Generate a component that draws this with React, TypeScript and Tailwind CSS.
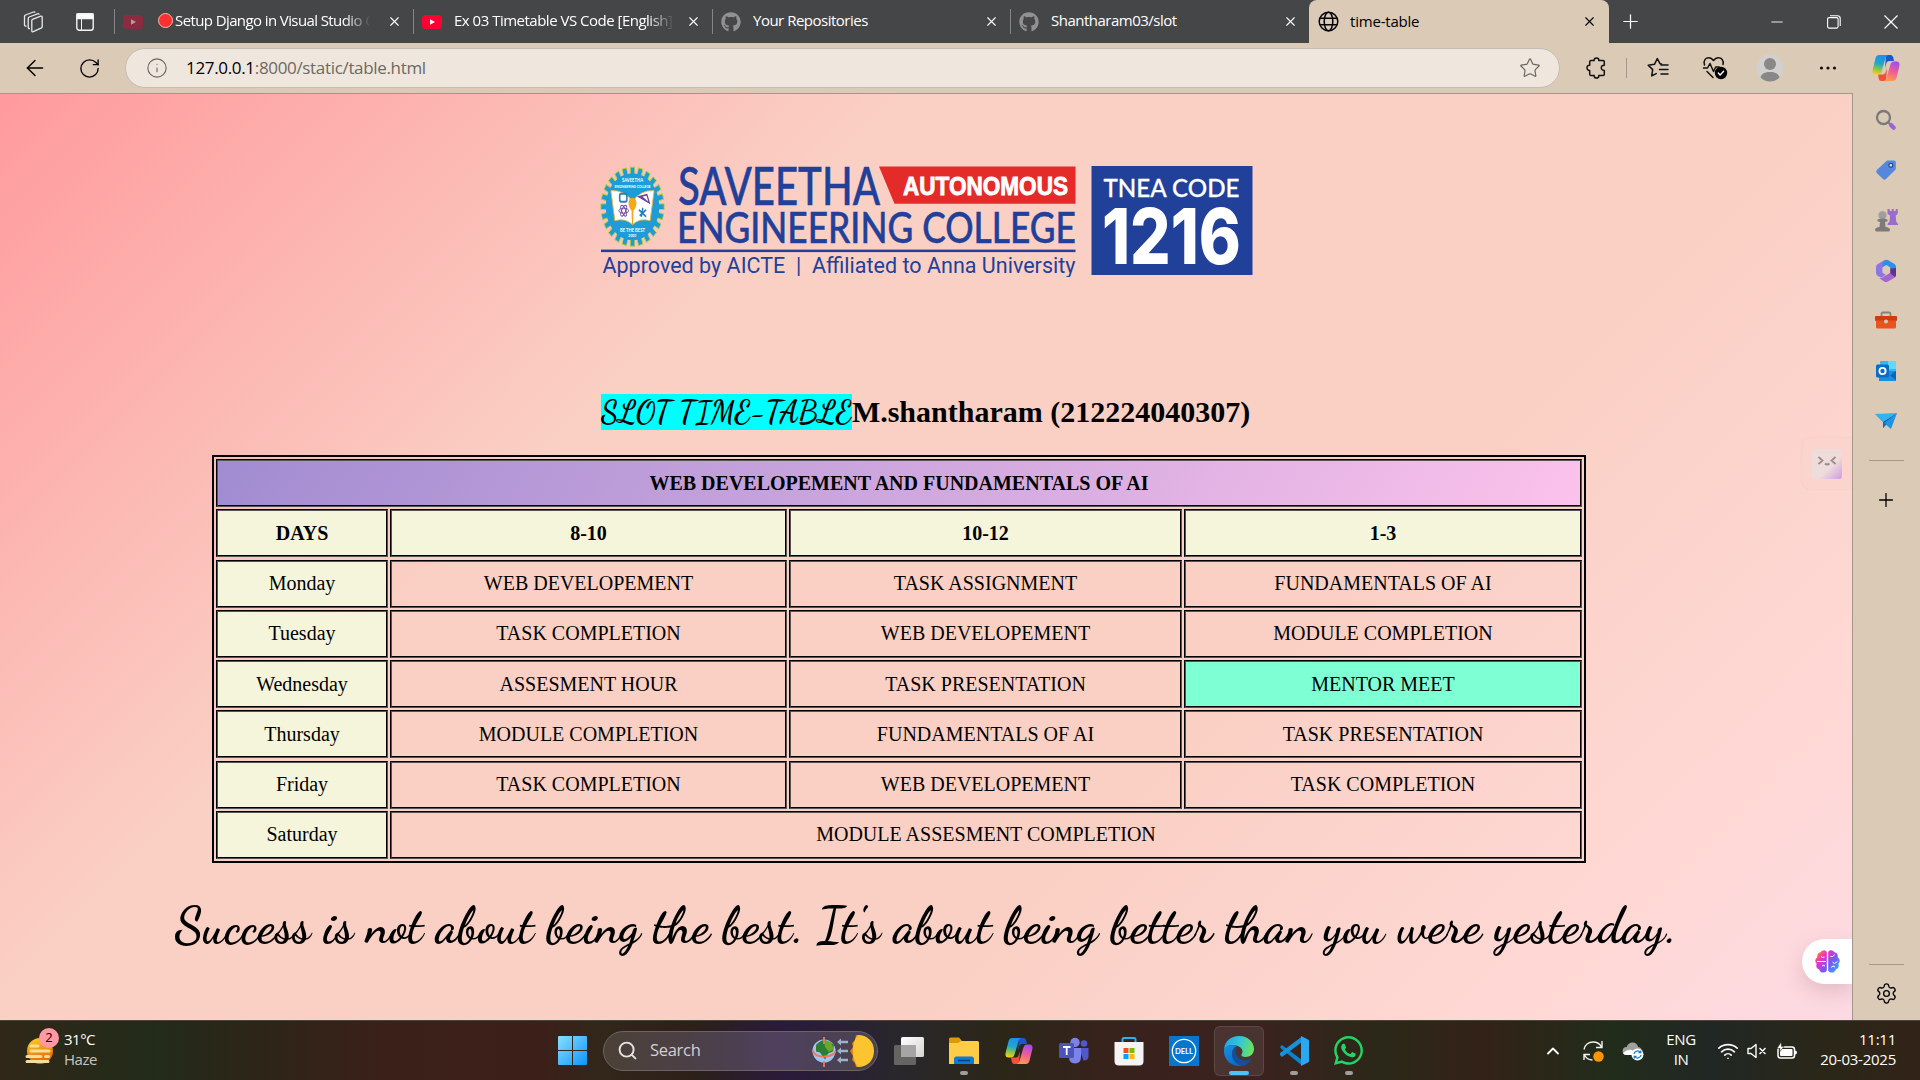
import React from "react";
import { ArrowLeft, RotateCw, Star, X, Plus, Minus, Info, Search, ChevronUp, Wifi, Settings } from "lucide-react";
import { FaGithub, FaWhatsapp } from "react-icons/fa";

const ui = "font-['Open_Sans','Noto_Sans',sans-serif]";
const serif = "font-['Liberation_Serif','Times_New_Roman',serif]";

function CopilotIcon({ size, id }: { size: number; id: string }) {
  return (
    <svg width={size} height={size} viewBox="0 0 28 28">
      <defs>
        <linearGradient id={id + "a"} x1="0.5" y1="0" x2="0.3" y2="1">
          <stop offset="0" stopColor="#1d8ff0" />
          <stop offset="0.45" stopColor="#22a8c4" />
          <stop offset="0.75" stopColor="#8fc648" />
          <stop offset="1" stopColor="#fccf0d" />
        </linearGradient>
        <linearGradient id={id + "b"} x1="0.7" y1="0" x2="0.4" y2="1">
          <stop offset="0" stopColor="#a14df0" />
          <stop offset="0.5" stopColor="#f05b98" />
          <stop offset="1" stopColor="#ff9a4d" />
        </linearGradient>
      </defs>
      <path d="M14 1h4.500c1.500 0 2.300 1 2.700 2.300L22 7h-4.500c-2 0-2.800 1-3.300 2.800L13 14Z" fill="#1c56cf" />
      <path d="M14 27H9.500c-1.500 0-2.300-1-2.700-2.300L6 20.500h4.500c2 0 2.800-1 3.300-2.800L15 14Z" fill="#f2503b" />
      <path d="M7.500 1h9c-1.700.4-2.500 1.600-3 3.300L9.700 17c-.7 2.400-1.700 3.500-4 3.500H3.500C1 20.500 0 18.700.6 16L3.500 4.200C4.100 2 5.300 1 7.500 1Z" fill={`url(#${id}a)`} />
      <path d="M20.500 27h-9c1.700-.4 2.500-1.600 3-3.300L18.300 11c.7-2.400 1.700-3.500 4-3.500h2.200c2.500 0 3.500 1.800 2.900 4.500l-2.900 11.800c-.6 2.200-1.800 3.200-4 3.200Z" fill={`url(#${id}b)`} />
    </svg>
  );
}

function Tab({ icon, title, width, extra }: { icon: React.ReactNode; title: React.ReactNode; width: string; extra?: string }) {
  return (
    <div className={`flex h-[43px] shrink-0 items-center ${width}`}>
      <div className="h-[25px] w-px bg-[#858587]" />
      <div className="ml-2 flex w-5 justify-center">{icon}</div>
      <div className={`ml-3 flex-1 overflow-hidden pb-[3px] text-[15px] leading-5 tracking-[-0.5px] whitespace-nowrap text-white ${extra ?? ""}`}>{title}</div>
      <X size={15} strokeWidth={1.8} className="mr-[11px] ml-3 shrink-0 text-white" />
    </div>
  );
}

function TabBar() {
  return (
    <div className="flex h-[43px] bg-[#454648]">
      <div className="flex w-[114px] items-center">
        <svg className="ml-[22px]" width="22" height="22" viewBox="0 0 22 22" fill="none" stroke="#e8e8e8" strokeWidth="1.300" strokeLinejoin="round">
          <path d="M10.500 8.300 18.700 5.200q1.500-.4 1.500 1v9.500q0 .7-.7 1.200l-8.200 3.800q-1.500.5-1.500-1V9.500q0-.8.700-1.200Z" />
          <path d="M8 17.500q-1.800.3-1.800-1.200V7.500q0-1 1-1.500L15.500 2.800q1.500-.4 1.700.8" />
          <path d="M4.500 15q-2 .3-2-1.200V5.500q0-1 1-1.500L11.500 1q1.300-.4 1.700.5" />
        </svg>
        <svg className="ml-[32px]" width="18" height="18" viewBox="0 0 18 18" fill="none" stroke="#f4f4f4" strokeWidth="1.400">
          <rect x="0.800" y="0.800" width="16.400" height="16.400" rx="2.500" />
          <path d="M1 1h16v4.500H1Z" fill="#fff" />
          <path d="M5.500 6v11" strokeWidth="1" />
        </svg>
      </div>
      <Tab
        width="w-[299px]"
        icon={<svg width="20" height="14" viewBox="0 0 20 14"><rect width="20" height="14" rx="3.500" fill="#8b2b40" /><path d="m8 4.200 5 2.800-5 2.800Z" fill="#a9a0a4" /></svg>}
        extra="!ml-[15px] [mask-image:linear-gradient(90deg,#000_86%,transparent_98%)]"
        title={<span className="flex items-center tracking-[-0.6px]"><i className="mr-[2px] block size-[15px] shrink-0 rounded-full border border-[#ffb5b0] bg-[#fb3030]" />Setup Django in Visual Studio Code</span>}
      />
      <Tab
        width="w-[299px]"
        icon={<svg width="20" height="14" viewBox="0 0 20 14"><rect width="20" height="14" rx="3.500" fill="#ff0033" /><path d="m8 4.200 5 2.800-5 2.800Z" fill="#fff" /></svg>}
        extra="[mask-image:linear-gradient(90deg,#000_88%,transparent_100%)]"
        title="Ex 03 Timetable VS Code [English]"
      />
      <Tab width="w-[298px]" icon={<FaGithub size={20} color="#919193" />} title="Your Repositories" />
      <Tab width="w-[299px]" icon={<FaGithub size={20} color="#919193" />} title="Shantharam03/slot" />
      <div className="flex h-[43px] w-[300px] items-center rounded-t-lg bg-[#dbcab6] text-black">
        <svg className="ml-[9px]" width="21" height="21" viewBox="0 0 21 21" fill="none" stroke="#000" strokeWidth="1.500">
          <circle cx="10.500" cy="10.500" r="9.300" />
          <ellipse cx="10.500" cy="10.500" rx="4.300" ry="9.300" />
          <path d="M2.200 7.200h16.600M2.200 13.800h16.600" />
        </svg>
        <div className="ml-[11px] flex-1 pb-px text-[15px] tracking-[-0.2px]">time-table</div>
        <X size={15} strokeWidth={1.8} className="mr-[12px]" />
      </div>
      <div className="flex flex-1 items-center text-white">
        <Plus size={23} strokeWidth={1.3} className="ml-[10px]" />
        <Minus size={18} strokeWidth={1.2} className="ml-[126px]" />
        <svg className="ml-[41px]" width="14" height="14" viewBox="0 0 14 14" fill="none" stroke="#fff" strokeWidth="1.100">
          <rect x="0.600" y="2.600" width="10.500" height="10.500" rx="1.500" />
          <path d="M3 .7h7.500q2.700 0 2.700 2.700V11" />
        </svg>
        <svg className="ml-[43px]" width="14" height="14" viewBox="0 0 14 14" stroke="#fff" strokeWidth="1.200"><path d="m.5.5 13 13m0-13-13 13" /></svg>
      </div>
    </div>
  );
}

function Toolbar() {
  return (
    <div className="flex h-[50px] items-center bg-[#dbcab6] text-black">
      <ArrowLeft size={26} strokeWidth={1.3} className="ml-[22px]" />
      <RotateCw size={23} strokeWidth={1.4} className="ml-[30px]" />
      <div className="ml-[24px] flex h-[40px] w-[1435px] items-center rounded-full border border-[#c4bdb4] bg-[#efe7de]">
        <Info size={22} strokeWidth={1.2} className="ml-5 text-[#666]" />
        <div className="ml-[18px] flex-1 text-[17px] tracking-[-0.33px] text-[#6d6862]"><span className="text-black">127.0.0.1</span>:8000/static/table.html</div>
        <Star size={22} strokeWidth={1.3} className="mr-[18px] text-[#6b6660]" />
      </div>
      <svg className="ml-[26px]" width="21" height="22" viewBox="0 0 21 22" fill="none" stroke="#111" strokeWidth="1.500" strokeLinejoin="round">
        <path d="M5 3.500h3.200C8 1.800 9 1 10.500 1S13 1.800 12.800 3.500H17q1.300 0 1.300 1.300v3.400c-2-.1-3 .9-3 2.600s1 2.700 3 2.600v3.800q0 1.300-1.300 1.300h-4.200c.2 1.700-.8 2.500-2.300 2.500S8 20.200 8.200 18.500H5q-1.300 0-1.300-1.300v-3.800C2 13.500 1 12.500 1 10.800s1-2.700 2.700-2.600V4.800Q3.700 3.500 5 3.500Z" />
      </svg>
      <div className="ml-[19px] h-5 w-px bg-[#a3998b]" />
      <svg className="ml-[20px]" width="22" height="22" viewBox="0 0 22 22" fill="none" stroke="#111" strokeWidth="1.500" strokeLinecap="round" strokeLinejoin="round">
        <path d="M14.500 7 13 6.700 10.300 1.500 7.500 7.300l-6.300.9 4.500 4.400-1 6.300 4.500-2.300" />
        <path d="M14 8h7M12.500 12.500H21M14 17h7" />
      </svg>
      <svg className="ml-[33px]" width="26" height="24" viewBox="0 0 26 24" fill="none" stroke="#111" strokeWidth="1.500" strokeLinecap="round" strokeLinejoin="round">
        <path d="M2.500 9C1 4 4 1.500 7 1.700c2 .1 3.300 1.200 4.500 2.800C12.700 2.900 14 1.800 16 1.700c3.500-.2 6 2.600 5 6.800" />
        <path d="M1.500 12h4l2.500-4.500 3.500 8 2.200-4.500h3.500M5 15.500l6 6" />
        <circle cx="19" cy="17" r="6.200" fill="#000" stroke="none" />
        <path d="m16.300 17 1.800 1.900 3.500-3.700" stroke="#fff" strokeWidth="1.400" />
      </svg>
      <svg className="ml-[28px]" width="28" height="28" viewBox="0 0 28 28">
        <circle cx="14" cy="14" r="13.600" fill="#d2d0ce" />
        <circle cx="14" cy="10" r="6" fill="#8a8886" />
        <path d="M4.500 23.500C5.500 19.500 9 18 14 18s8.500 1.500 9.500 5.500A13.500 13.500 0 0 1 4.500 23.500Z" fill="#8a8886" />
      </svg>
      <svg className="ml-[35px]" width="18" height="6" viewBox="0 0 18 6" fill="#111"><circle cx="2.500" cy="3" r="1.600" /><circle cx="9" cy="3" r="1.600" /><circle cx="15.500" cy="3" r="1.600" /></svg>
      <div className="ml-[35px]"><CopilotIcon size={28} id="top" /></div>
    </div>
  );
}

function CollegeLogo() {
  const teeth = Array.from({ length: 24 }, (_, i) => i * 15);
  return (
    <svg className="ml-[600px] block" width="654" height="112" viewBox="600 165 654 112" fontFamily="Lato, sans-serif">
      <g transform="translate(632.500 206.700) scale(.8 1)">
        {teeth.map((a) => (
          <rect key={a} x="-2.800" y="-39.500" width="5.600" height="10" fill="#1d9cd8" stroke="#b5cf3a" strokeWidth="1" transform={`rotate(${a})`} />
        ))}
        <circle r="33.500" fill="#1d9cd8" />
        <path d="M-27-16Q-10-17 0-5 10-17 27-16L22 14Q9 11 0 18-9 11-22 14Z" fill="#fff" stroke="#e7b93a" strokeWidth="1" />
        <path d="M0-5V18" stroke="#d9a520" strokeWidth="1.500" />
        <path d="M-5-3Q-5-9 0-9T5-3Q4 2 1 4V12H-1V4Q-4 2-5-3Z" fill="#f5a81c" />
        <rect x="-16" y="-13" width="9" height="8" rx="2" fill="none" stroke="#2a7fb8" strokeWidth="2" />
        <g fill="none" stroke="#6b3f98" strokeWidth="1"><ellipse cx="-11" cy="4" rx="6" ry="2.400" /><ellipse cx="-11" cy="4" rx="6" ry="2.400" transform="rotate(60 -11 4)" /><ellipse cx="-11" cy="4" rx="6" ry="2.400" transform="rotate(120 -11 4)" /></g>
        <path d="m8-10 10-2 3 8Zm3 0 6 4" fill="none" stroke="#6b3f98" strokeWidth="1.500" />
        <path d="m8 3 9 7M13 1l-2 9M17 3l-8 6" stroke="#1d80c0" strokeWidth="1.800" />
        <g fill="#fff" fontWeight="700" textAnchor="middle" fontSize="5.200">
          <text y="-24.500">SAVEETHA</text>
          <text y="-18.800" fontSize="4">ENGINEERING COLLEGE</text>
          <text y="25">BE THE BEST</text>
          <text y="30.500" fontSize="4.500">2001</text>
        </g>
      </g>
      <g fill="#21409a" fontWeight="500" stroke="#21409a" strokeWidth=".5">
        <text x="678" y="205" fontSize="51.500" textLength="202" lengthAdjust="spacingAndGlyphs">SAVEETHA</text>
        <text x="677" y="243" fontSize="42.500" textLength="399" lengthAdjust="spacingAndGlyphs">ENGINEERING COLLEGE</text>
      </g>
      <path d="M879 166.500H1075.500V203.700H894.500Z" fill="#e42b2a" />
      <text x="903" y="195" fontFamily="Liberation Sans, sans-serif" fontWeight="700" fontSize="26.500" fill="#fff" stroke="#fff" strokeWidth=".9" textLength="165" lengthAdjust="spacingAndGlyphs">AUTONOMOUS</text>
      <rect x="601" y="249.600" width="474.500" height="2.500" fill="#21409a" />
      <text x="602.500" y="272.700" fontFamily="Roboto, sans-serif" fontSize="21.500" fill="#21409a" textLength="473" lengthAdjust="spacing">Approved by AICTE&nbsp; |&nbsp; Affiliated to Anna University</text>
      <rect x="1091.500" y="166" width="161" height="109" fill="#21409a" />
      <text x="1103.500" y="196.500" fontWeight="500" fontSize="25.500" fill="#fff" stroke="#fff" strokeWidth=".3" textLength="136" lengthAdjust="spacingAndGlyphs">TNEA CODE</text>
      <text x="1102" y="263.500" fontFamily="Inter, sans-serif" fontWeight="800" fontSize="77" fill="#fff" textLength="139" lengthAdjust="spacingAndGlyphs">1216</text>
    </svg>
  );
}

const rows: [string, string[]][] = [
  ["Monday", ["WEB DEVELOPEMENT", "TASK ASSIGNMENT", "FUNDAMENTALS OF AI"]],
  ["Tuesday", ["TASK COMPLETION", "WEB DEVELOPEMENT", "MODULE COMPLETION"]],
  ["Wednesday", ["ASSESMENT HOUR", "TASK PRESENTATION", "MENTOR MEET"]],
  ["Thursday", ["MODULE COMPLETION", "FUNDAMENTALS OF AI", "TASK PRESENTATION"]],
  ["Friday", ["TASK COMPLETION", "WEB DEVELOPEMENT", "TASK COMPLETION"]],
];

function Cell({ children, className = "" }: { children: React.ReactNode; className?: string }) {
  return <div className={`flex items-center justify-center border-2 border-black pb-px text-[20px] leading-none [border-style:groove] ${className}`}>{children}</div>;
}

function Timetable() {
  return (
    <div className="ml-[212px] grid w-[1374px] grid-cols-[172px_397px_393px_398px] grid-rows-[repeat(8,48px)] gap-x-[2px] gap-y-[2.28px] border-2 border-black p-[2px]">
      <Cell className="col-span-4 bg-linear-[120deg,#a18cd1,#fbc2eb] font-bold">WEB DEVELOPEMENT AND FUNDAMENTALS OF AI</Cell>
      {["DAYS", "8-10", "10-12", "1-3"].map((h) => (
        <Cell key={h} className="bg-[#f5f5dc] font-bold">{h}</Cell>
      ))}
      {rows.map(([day, slots]) => (
        <React.Fragment key={day}>
          <Cell className="bg-[#f5f5dc]">{day}</Cell>
          {slots.map((s, i) => (
            <Cell key={i} className={s === "MENTOR MEET" ? "bg-[#7fffd4]" : ""}>{s}</Cell>
          ))}
        </React.Fragment>
      ))}
      <Cell className="bg-[#f5f5dc]">Saturday</Cell>
      <Cell className="col-span-3">MODULE ASSESMENT COMPLETION</Cell>
    </div>
  );
}

function Page() {
  return (
    <div className={`relative h-[926px] w-[1852px] overflow-hidden bg-linear-[135deg,#ff9a9e_0%,#fad0c4_33%,#fad0c4_66%,#ffd9d7_90%,#fbdae6_102%] pt-[71px] text-black ${serif}`}>
      <CollegeLogo />
      <div className="mt-[117px] ml-[601px] flex h-[36px] items-center text-[30px] leading-none font-bold whitespace-nowrap">
        <span className="flex h-[36px] items-center bg-[#00ffff] font-['Dancing_Script','Lato',cursive] text-[30px] leading-[36px] font-bold">SLOT TIME-TABLE</span>
        <span>M.shantharam (212224040307)</span>
      </div>
      <div className="h-[25px]" />
      <Timetable />
      <div className="mt-[28px] text-center font-['Dancing_Script','Lato',cursive] text-[50px] leading-[70px] font-bold whitespace-nowrap">
        Success is not about being the best. It's about being better than you were yesterday.
      </div>
      <div className="absolute top-[344px] right-0 flex h-[51px] w-[50px] items-center rounded-l-lg bg-[#fbd4ce] pl-[10px] shadow-[0_0_2px_rgba(160,110,110,.12)]">
        <svg width="30" height="30" viewBox="0 0 30 30">
          <defs><linearGradient id="face" x1="0.200" y1="0.200" x2="1" y2="1"><stop offset="0.500" stopColor="#eedcdb" /><stop offset="1" stopColor="#cf9be0" /></linearGradient></defs>
          <rect width="30" height="30" rx="3" fill="url(#face)" />
          <path d="m6.500 8 4 3.500-4 3.500M23.500 8l-4 3.500 4 3.500M13 14.500q2 2 4.500 0" fill="none" stroke="#9d8b8c" strokeWidth="1.800" />
        </svg>
      </div>
      <div className="absolute top-[845px] right-0 flex h-[45px] w-[50px] items-center rounded-l-full bg-white pl-[13px] shadow-[0_8px_20px_rgba(130,70,90,.2)]">
        <svg width="25" height="23" viewBox="0 0 25 23">
          <defs><linearGradient id="brain" x1="0" y1="0.100" x2="1" y2="0.900"><stop offset="0" stopColor="#ff8a2a" /><stop offset="0.300" stopColor="#ec30c5" /><stop offset="0.600" stopColor="#7857f5" /><stop offset="1" stopColor="#22b5ff" /></linearGradient></defs>
          <path d="M11.800 2.200v18.600C10 23.500 5 23.200 4.200 19.500 1 18.500.8 15.500 1.800 13.800-.5 12 0 8.500 2.300 7.200 1.800 4 4 2.500 5.700 2.300 7-.2 10.800-.4 11.800 2.200Zm1.400 0v18.600c1.800 2.700 6.800 2.400 7.600-1.300 3.200-1 3.400-4 2.400-5.700C25.500 12 25 8.500 22.700 7.200 23.200 4 21 2.500 19.300 2.300 18-.2 14.200-.4 13.200 2.200Z" fill="url(#brain)" />
          <path d="M2 11.500h9M6 6.500q1 1.500 3.500.5M7 16q1-1.500 3 0M15.500 6.500h2.500l1.500-2M17.500 12l2 1.500 3-2M16 17.500l2-1.500 2 1" fill="none" stroke="#fff" strokeWidth="1" />
        </svg>
      </div>
    </div>
  );
}

function EdgeSidebar() {
  const icons = [
    <svg width="22" height="22" viewBox="0 0 22 22"><circle cx="8.500" cy="8.500" r="6.500" fill="none" stroke="#7b7a79" strokeWidth="2.300" /><path d="m13.500 13.500 2 2" stroke="#7b7a79" strokeWidth="2" /><path d="m16 16 2.700 2.700" stroke="#9a62db" strokeWidth="4.200" strokeLinecap="round" /></svg>,
    <svg width="22" height="22" viewBox="0 0 22 22"><path d="M12 1.500h7q1.800 0 1.800 1.800v7L11 20q-1.500 1.400-3 0L1.800 14q-1.500-1.500 0-3Z" fill="#5588dc" /><circle cx="15.800" cy="6.300" r="1.900" fill="#dce6f5" stroke="#26488d" strokeWidth="1.200" /></svg>,
    <svg width="24" height="24" viewBox="0 0 24 24"><path d="M13.500 1h2.200v2h2V1h2v2h2V1h2v5l-2 1.500.5 6 1.800 2.500v1H13.500v-1l2-2.500.5-6-2.500-1.500Z" fill="#9b6bce" /><circle cx="8.500" cy="7.300" r="4" fill="#a09e9c" /><path d="M3.500 11.500q5-2 10 0v1.700l-2.500.8.500 5q4 .5 4.500 2.500 0 2-1.500 2h-12Q1 23.500 1 21.500q.5-2 4.500-2.500l.5-5-2.500-.8Z" fill="#7d7b79" /></svg>,
    <svg width="24" height="24" viewBox="0 0 24 24">
      <path d="M10.500 1.200q2-1 3.800 0L20.500 5q1.500 1 1.500 2.700V13l-6-3.500V8.300L12.300 6 8 8.500V3Z" fill="#2f8fe8" />
      <path d="M10.500 1.200Q8.500 3 8.500 6v7.500l3.500 2.300-4 2.400q-1 .5-2 0l-2.500-1.500Q2 15.700 2 14V8q0-1.700 1.500-2.700Z" fill="#8f74e6" />
      <path d="M22 11.500V16q0 1.700-1.500 2.700L14 22.500q-2 1-3.800 0L5 19q2 .5 3.500-.5l7.500-4.700V9.500Z" fill="#a565cf" />
      <path d="M22 9v7q0 1.200-1 2l-4.500-3.500V9.500Z" fill="#62318c" />
      <path d="M12.300 7.500 16 9.700v4l-3.700 2.300-3.500-2.200V9.600Z" fill="#dbcab6" />
    </svg>,
    <svg width="24" height="20" viewBox="0 0 24 20"><path d="M7.500 5V3q0-1.500 1.500-1.500h6q1.500 0 1.500 1.500v2" fill="none" stroke="#858481" strokeWidth="1.800" /><rect x="1" y="5" width="22" height="5" rx="1" fill="#cf3c10" /><path d="M2 9.500h20V16q0 1.500-1.500 1.500h-17Q2 17.500 2 16Z" fill="#e9541c" /><circle cx="12" cy="10.500" r="2" fill="#ccc" /></svg>,
    <svg width="22" height="22" viewBox="0 0 22 22"><path d="M5 1h16v11H5Z" fill="#35b8f1" /><path d="M13 1h8v8h-8Z" fill="#62d8fb" /><path d="M4 11h17v10H4Z" fill="#1490df" /><path d="m21 11-6 4.500 6 4.500Z" fill="#0a64b8" /><rect x="1" y="4.500" width="13" height="13" rx="1.500" fill="#0a6cc8" /><circle cx="7.500" cy="11" r="3.100" fill="none" stroke="#fff" strokeWidth="1.800" /></svg>,
    <svg width="24" height="20" viewBox="0 0 24 20"><path d="M1 3 23 2 9 11Z" fill="#30b4f2" /><path d="M23 2 9 11v6Z" fill="#0d5cab" /><path d="M23 2 17 18 10 12Z" fill="#1e95e0" /><path d="m1 3 8 8v6l3-3.500Z" fill="#1270c0" /></svg>,
  ];
  return (
    <div className="flex h-[927px] flex-1 flex-col items-center bg-[#dbcab6] pr-px">
      <div className="mt-[2px] flex flex-col items-center">
        {icons.map((icon, i) => (
          <div key={i} className="flex h-[50.200px] items-center justify-center">{icon}</div>
        ))}
      </div>
      <div className="mt-[14px] h-px w-[35px] bg-[#a3998b]" />
      <Plus size={22} strokeWidth={1.4} className="mt-[28px] text-black" />
      <div className="mt-auto h-px w-[35px] bg-[#a3998b]" />
      <Settings size={23} strokeWidth={1.4} className="mt-[17px] mb-[15px] text-black" />
    </div>
  );
}

function AppSlot({ children, active, running }: { children: React.ReactNode; active?: boolean; running?: boolean }) {
  return (
    <div className={`mx-[2.500px] flex h-[50px] w-[50px] shrink-0 flex-col items-center rounded-md ${active ? "border border-white/10 bg-white/8" : "border border-transparent"}`}>
      <div className="mt-[9px] flex h-[30px] w-[30px] items-center justify-center">{children}</div>
      <div className={`mt-[5px] h-1 shrink-0 rounded-full ${active ? "w-5 bg-[#4cc2ff]" : running ? "w-2 bg-[#a19d99]" : "w-2"}`} />
    </div>
  );
}

function Taskbar() {
  return (
    <div className="flex h-[60px] items-center border-t border-[#4b4438] bg-linear-[90deg,#302718_0%,#222b19_8%,#2c2518_13%,#3b2019_20%,#3c1f19_28%,#33261a_31%,#2c2019_36%,#2a1a3c_41%,#29272b_47%,#2b2618_52%,#38221c_58%,#3b2220_65%,#2b2818_72%,#332217_77%,#212c1a_84%,#212725_89%,#2a2718_95%,#322317_100%] text-white">
      <div className="relative ml-[25px] h-[30px] w-[30px]">
        <svg width="30" height="30" viewBox="0 0 30 30">
          <defs><linearGradient id="haze" x1="0" y1="0" x2="0.300" y2="1"><stop offset="0" stopColor="#ffd21c" /><stop offset="1" stopColor="#e8660c" /></linearGradient></defs>
          <circle cx="15" cy="15" r="13" fill="url(#haze)" />
          <path d="M6 10h7M6 15h18M2 20.500h14M20.500 20.500h3M2 25.500h21" stroke="#f5dd9b" strokeWidth="3" strokeLinecap="round" />
        </svg>
        <span className="absolute -top-[8px] left-[14px] flex size-5 items-center justify-center rounded-full bg-[#ff99a4] text-[13px] leading-none text-black">2</span>
      </div>
      <div className="ml-[9px] w-[494px] pb-1 text-[15px] leading-5 tracking-[-0.5px]">
        <div>31°C</div>
        <div className="text-[#c8c4bf]">Haze</div>
      </div>
      <svg width="29" height="29" viewBox="0 0 29 29">
        <defs><linearGradient id="win" x1="0" y1="0" x2="1" y2="1"><stop offset="0" stopColor="#86e0ff" /><stop offset="1" stopColor="#0f94fa" /></linearGradient></defs>
        <path d="M1 0h13v14H0V1Q0 0 1 0ZM15 0h13q1 0 1 1v13H15ZM0 15h14v14H1q-1 0-1-1ZM15 15h14v13q0 1-1 1H15Z" fill="url(#win)" />
      </svg>
      <div className="ml-4 flex h-[40px] w-[275px] items-center rounded-full border border-[#6d6268] bg-linear-[90deg,#4b4136_0%,#4c3f50_48%,#50405f_62%,#47434b_100%]">
        <Search size={21} strokeWidth={2.2} className="ml-[13px] text-[#e6e3e3]" />
        <span className="ml-[12px] flex-1 text-[16.500px] tracking-[-0.3px] text-[#d5cfd2]">Search</span>
        <svg className="mr-[2px]" width="64" height="34" viewBox="0 0 64 34">
          <circle cx="13" cy="17" r="11.500" fill="#9dc5ee" />
          <path d="M5 11q5-6 10-4.500l8 4-1 7-5 2-3 6-5-7-4-1Z" fill="#2e7d34" /><path d="m13 6 7 2 3 7-5 3-4-5Z" fill="#69a82c" />
          <path d="M13 3v7M13 27v6M1.500 16q2 7 12 6.500T24.500 17" fill="none" stroke="#ef7764" strokeWidth="1.800" />
          <path d="M29 8h8M29 17h8M29 26h8" stroke="#9eb0cc" strokeWidth="2.500" /><path d="m26 8 4-3.500v7Zm0 9 4-3.500v7Zm0 9 4-3.500v7Z" fill="#9eb0cc" />
          <path d="m45 1 4 0v32h-4l-1-4-3-3 1-4-3-5 3-4-1-4 3-3Z" fill="#ec7a13" />
          <path d="M47 1c10 0 16 7 16 16s-6 16-16 16c-7-8-7-24 0-32Z" fill="#fcc42f" />
        </svg>
      </div>
      <div className="ml-[3px] flex">
        <AppSlot><svg width="30" height="30" viewBox="0 0 30 30"><defs><linearGradient id="tv" x1="0" y1="0" x2="1" y2="1"><stop offset="0" stopColor="#fff" /><stop offset="1" stopColor="#d4d4d4" /></linearGradient></defs><rect x="0" y="9" width="22" height="20" rx="1.500" fill="#666462" /><rect x="7" y="1" width="23" height="20" rx="1.500" fill="url(#tv)" /><path d="M7 9h15v12H7Z" fill="#a6a4a4" /></svg></AppSlot>
        <AppSlot running><svg width="30" height="28" viewBox="0 0 30 28"><path d="M0 2q0-1.500 1.500-1.500H10l3 3.500h12v6H0Z" fill="#dc9a06" /><path d="M0 6h9l3-2h16.500Q30 4 30 5.500V27H0Z" fill="#ffcd45" /><path d="M5 27v-5q0-2.500 2.500-2.500h15Q25 19.500 25 22v5Z" fill="#0d7ad4" /><path d="M9 23.500h12" stroke="#063f7d" strokeWidth="1.500" /></svg></AppSlot>
        <AppSlot><CopilotIcon size={28} id="task" /></AppSlot>
        <AppSlot><svg width="30" height="28" viewBox="0 0 30 28"><circle cx="25" cy="6.500" r="3.300" fill="#5059c9" /><path d="M20 11h9.500v8q0 4.500-5 4.500Z" fill="#5059c9" /><circle cx="16" cy="5.500" r="4.700" fill="#7b83eb" /><path d="M10 11h12v8.500q0 7-6 7t-6-7Z" fill="#7b83eb" /><rect x="0" y="6" width="15" height="15" rx="1.500" fill="#4b53bc" /><path d="M4 10h7.500M7.700 10v8" stroke="#fff" strokeWidth="1.800" /></svg></AppSlot>
        <AppSlot><svg width="30" height="30" viewBox="0 0 30 30"><path d="M8.500 6V3.500Q8.500 2 10 2h10q1.500 0 1.500 1.500V6" fill="none" stroke="#28b2ee" strokeWidth="2" /><path d="M.5 6h29v19q0 4.500-4.500 4.500H5Q.5 29.500.5 25Z" fill="#f4f4f4" /><path d="M9.500 12h5v5h-5Z" fill="#f25022" /><path d="M15.500 12h5v5h-5Z" fill="#7fba00" /><path d="M9.500 18h5v5h-5Z" fill="#00a4ef" /><path d="M15.500 18h5v5h-5Z" fill="#ffb900" /></svg></AppSlot>
        <AppSlot><svg width="30" height="30" viewBox="0 0 30 30"><rect width="30" height="30" fill="#0676ce" /><circle cx="15" cy="15" r="11.700" fill="none" stroke="#fff" strokeWidth="1.300" /><text x="15" y="17.800" textAnchor="middle" fontSize="7.500" fontWeight="700" fill="#fff" fontFamily="Lato, sans-serif" textLength="18" lengthAdjust="spacingAndGlyphs">DELL</text></svg></AppSlot>
        <AppSlot active><svg width="30" height="30" viewBox="0 0 30 30"><defs><linearGradient id="eg1" x1="0" y1="0.300" x2="1" y2="0.500"><stop offset="0" stopColor="#25a5e8" /><stop offset="0.500" stopColor="#35c5d5" /><stop offset="1" stopColor="#6be45a" /></linearGradient><linearGradient id="eg2" x1="0" y1="0" x2="0.500" y2="1"><stop offset="0" stopColor="#1892df" /><stop offset="1" stopColor="#0b6cc6" /></linearGradient></defs><path d="M0 13C1 5 7 0 15 0c9 0 15 6 15 13 0 5-4 8-8.500 8-3 0-4.500-1.300-4-2.500 1.500-2 1.500-5-1-7C12 8 4 8 0 13Z" fill="url(#eg1)" /><path d="M0 13c3-4 9-5 13-3-5 2-6 8-3 13 2 4 6 6.500 8.500 6.700C8 31.500-1 24 0 13Z" fill="url(#eg2)" /><path d="M13 10c-3 5-1 11 4 13.500 4 2 8.500 1 11-1-2 4-6 7-9.500 7.200-6-.7-10-5-10.500-10.500C8 15 9.500 12 13 10Z" fill="#10509f" /></svg></AppSlot>
        <AppSlot running><svg width="30" height="30" viewBox="0 0 30 30"><path d="m1 11 2-2 20 15v5.500L2 12.500Z" fill="#0b82d0" /><path d="m1 19 2 2L23 6V.5L1 17Z" fill="#1592dc" /><path d="m22 0 7 3.500q1 .5 1 1.500v20q0 1-1 1.500L22 30Z" fill="#2aa8f2" /></svg></AppSlot>
        <AppSlot running><FaWhatsapp size={33} color="#25d366" className="shrink-0" /></AppSlot>
      </div>
      <div className="ml-auto flex items-center">
        <ChevronUp size={20} strokeWidth={2.2} />
        <svg className="ml-[19px]" width="22" height="22" viewBox="0 0 22 22" fill="none" stroke="#f2f2f2" strokeWidth="1.400"><path d="M2 9.500C3 4.500 7 2 11 2c4 0 7 2 8.500 5M20 1v6.500h-6M2 20v-5.500h6M2.500 15c1.500 3 4 5 8 5" /><circle cx="16.500" cy="16.500" r="5.200" fill="#ff9500" stroke="none" /></svg>
        <svg className="ml-[18px]" width="22" height="20" viewBox="0 0 22 20"><path d="M4.500 14a4 4 0 0 1 .2-8C5.500 3 8 1.500 10.500 1.500c3 0 5 2 5.700 4.500 2.500.5 3.800 2 3.800 4.500V14Z" fill="#a1a09f" /><path d="M1 12q4-4 9-3l4 5H4Q2 14 1 12Z" fill="#fff" /><circle cx="15.500" cy="13.500" r="6" fill="#fff" /><path d="M12 13a3.600 3.600 0 0 1 6.500-1.500m.5 2.500a3.600 3.600 0 0 1-6.500 1.500M18.800 9.500v2.200h-2.300M12.200 17.500v-2.200h2.300" fill="none" stroke="#1478d0" strokeWidth="1.200" /></svg>
        <div className="ml-[18px] w-[38px] pb-[3px] text-center text-[15px] leading-5 tracking-[-0.4px]"><div>ENG</div><div>IN</div></div>
        <Wifi size={22} strokeWidth={1.8} className="ml-[17px]" />
        <svg className="ml-[8px]" width="20" height="16" viewBox="0 0 20 16" fill="none" stroke="#fff" strokeWidth="1.400" strokeLinejoin="round"><path d="M1 5.500h3L9 1.500v13L4 10.500H1ZM12.500 5l6 6m0-6-6 6" /></svg>
        <svg className="ml-[10px]" width="21" height="18" viewBox="0 0 21 18"><rect x="1" y="5" width="16.500" height="11" rx="2.500" fill="none" stroke="#fff" strokeWidth="1.500" /><rect x="3" y="7" width="12.500" height="7" rx="1" fill="#fff" /><path d="M18 8.500q2 0 2 2t-2 2Z" fill="#fff" /><path d="M4 0 0 6.500h3L2.500 10 7 4.500H4.500Z" fill="#fff" stroke="#26281c" strokeWidth=".6" /></svg>
        <div className="mr-[24px] w-[98px] pb-1 text-right text-[15px] leading-5 tracking-[-0.25px]"><div>11:11</div><div className="whitespace-nowrap">20-03-2025</div></div>
      </div>
    </div>
  );
}

export default function App() {
  return (
    <div className={`h-[1080px] w-[1920px] overflow-hidden bg-[#dbcab6] ${ui}`}>
      <TabBar />
      <Toolbar />
      <div className="flex h-[927px]">
        <div className="w-[1853px] shrink-0 border-t border-r border-[#a3978a]"><Page /></div>
        <EdgeSidebar />
      </div>
      <Taskbar />
    </div>
  );
}
